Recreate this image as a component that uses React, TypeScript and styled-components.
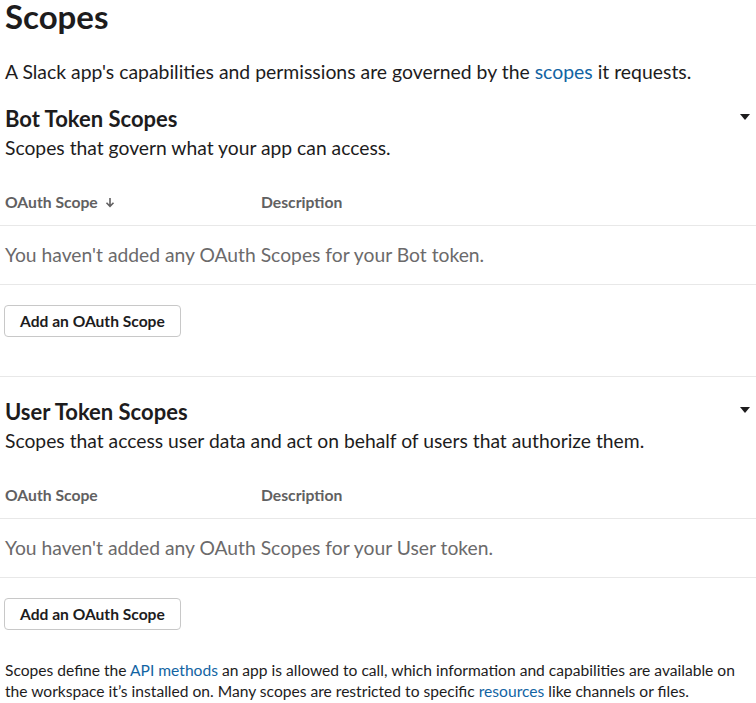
import React from 'react'
import styled, { createGlobalStyle } from 'styled-components'

const GlobalStyle = createGlobalStyle`
  body {
    margin: 0;
    background: #fff;
    font-family: Lato, "Noto Sans", sans-serif;
    color: #1d1c1d;
  }
`

const Page = styled.div`
  width: 756px;
  padding-left: 5px;
  box-sizing: border-box;
`

const Title = styled.h1`
  margin: 0;
  font-size: 33px;
  line-height: 32px;
  font-weight: 700;
`

const Intro = styled.p`
  margin: 27px 0 0;
  font-size: 19.4px;
  line-height: 26px;
`

const Link = styled.a`
  color: #1264a3;
  text-decoration: none;
`

const Section = styled.section<{ $top: number }>`
  margin-top: ${(p) => p.$top}px;
`

const SectionHead = styled.div`
  display: flex;
  align-items: center;
  justify-content: space-between;
  padding-right: 6px;
`

const SectionTitle = styled.h2`
  margin: 0;
  font-size: 22px;
  line-height: 28px;
  font-weight: 700;
`

const Caret = styled.span`
  width: 0;
  height: 0;
  border-left: 5px solid transparent;
  border-right: 5px solid transparent;
  border-top: 6px solid #1d1c1d;
  margin-top: -5px;
`

const Subtitle = styled.p`
  margin: 2px 0 0;
  font-size: 19.3px;
  line-height: 26px;
`

const HeaderRow = styled.div`
  display: grid;
  grid-template-columns: 256px 1fr;
  margin-top: 31px;
  margin-left: -5px;
  padding: 0 0 13px 5px;
  border-bottom: 1px solid #e8e8e8;
`

const HeaderCell = styled.div`
  display: flex;
  align-items: center;
  gap: 7px;
  font-size: 15.7px;
  line-height: 20px;
  font-weight: 700;
  color: #616061;
`

const EmptyRow = styled.div`
  margin-left: -5px;
  padding: 16px 0 16px 5px;
  font-size: 19.3px;
  line-height: 26px;
  color: #6b6a6b;
  border-bottom: 1px solid #e8e8e8;
`

const Button = styled.button`
  margin-top: 20px;
  margin-left: -1px;
  height: 32px;
  padding: 0 15px;
  font-family: Lato, "Noto Sans", sans-serif;
  font-size: 15.6px;
  font-weight: 700;
  color: #1d1c1d;
  background: #fff;
  border: 1px solid #c8c8c8;
  border-radius: 4px;
  cursor: pointer;
`

const Divider = styled.hr`
  margin: 39px 0 0 -5px;
  border: 0;
  border-top: 1px solid #e8e8e8;
`

const Footer = styled.p`
  margin: 30px 0 0;
  font-size: 15.6px;
  line-height: 21px;
  color: #1d1c1d;
`

const SortArrow = () => (
  <svg width="10" height="11" viewBox="0 0 10 11" aria-hidden="true">
    <path d="M5 1v8M1.5 5.8 5 9.3l3.5-3.5" fill="none" stroke="#616061" strokeWidth="1.6" />
  </svg>
)

type ScopeTableProps = {
  title: string
  subtitle: string
  token: string
  sorted?: boolean
  top: number
}

const ScopeTable = ({ title, subtitle, token, sorted, top }: ScopeTableProps) => (
  <Section $top={top}>
    <SectionHead>
      <SectionTitle>{title}</SectionTitle>
      <Caret />
    </SectionHead>
    <Subtitle>{subtitle}</Subtitle>
    <HeaderRow>
      <HeaderCell>
        OAuth Scope {sorted && <SortArrow />}
      </HeaderCell>
      <HeaderCell>Description</HeaderCell>
    </HeaderRow>
    <EmptyRow>You haven't added any OAuth Scopes for your {token} token.</EmptyRow>
    <Button>Add an OAuth Scope</Button>
  </Section>
)

export default function App() {
  return (
    <Page>
      <GlobalStyle />
      <Title>Scopes</Title>
      <Intro>
        A Slack app's capabilities and permissions are governed by the <Link href="#">scopes</Link> it
        requests.
      </Intro>
      <ScopeTable
        top={20}
        title="Bot Token Scopes"
        subtitle="Scopes that govern what your app can access."
        token="Bot"
        sorted
      />
      <Divider />
      <ScopeTable
        top={21}
        title="User Token Scopes"
        subtitle="Scopes that access user data and act on behalf of users that authorize them."
        token="User"
      />
      <Footer>
        Scopes define the <Link href="#">API methods</Link> an app is allowed to call, which information and
        capabilities are available on the workspace it’s installed on. Many scopes are restricted to specific{' '}
        <Link href="#">resources</Link> like channels or files.
      </Footer>
    </Page>
  )
}
